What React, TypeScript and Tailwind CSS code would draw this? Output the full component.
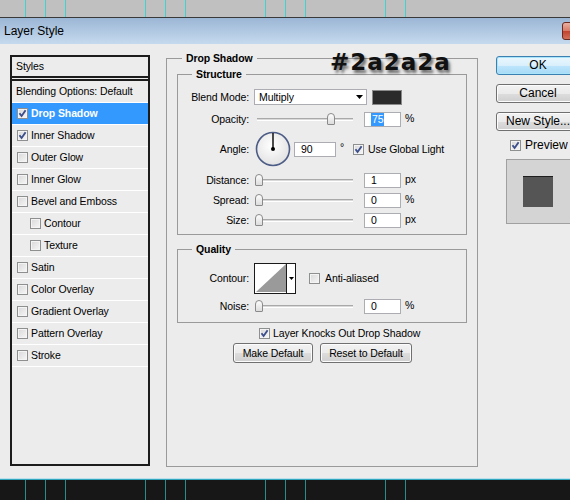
import React from 'react'

// Photoshop "Layer Style" dialog, Win7 chrome

function Ruler({ bar, line }: { bar: string; line: string }) {
  const groups = [3, 3, 3, 2]
  return (
    <div className={`flex shrink-0 gap-[79px] pl-[25px] ${bar}`}>
      {groups.map((n, i) => (
        <div key={i} className="flex gap-[19px]">
          {Array.from({ length: n }).map((_, j) => (
            <div key={j} className={`w-px ${line}`} />
          ))}
        </div>
      ))}
    </div>
  )
}

function Check({ on }: { on?: boolean }) {
  return (
    <span className="inline-flex h-[11px] w-[11px] shrink-0 items-center justify-center border border-[#8e8f8f] bg-[linear-gradient(135deg,#d8d8d8,#f7f7f7)] shadow-[inset_0_0_0_1px_#f4f4f4]">
      {on && (
        <svg viewBox="0 0 9 9" className="h-[9px] w-[9px]">
          <path d="M1.5 4.2 L3.6 7 L7.6 1.3" fill="none" stroke="#3c4f8c" strokeWidth="1.9" />
        </svg>
      )}
    </span>
  )
}

function StyleRow({ label, on, active, indent }: { label: string; on?: boolean; active?: boolean; indent?: boolean }) {
  return (
    <div
      className={`flex h-[22px] items-center gap-[3px] border-b border-white ${indent ? 'pl-[18px]' : 'pl-[5px]'} ${
        active ? 'bg-[#3399ff] font-bold text-white' : ''
      }`}
    >
      <Check on={on} />
      <span>{label}</span>
    </div>
  )
}

function Label({ children }: { children: React.ReactNode }) {
  return <span className="w-[71px] shrink-0 text-right">{children}</span>
}

function Slider({ at }: { at: number }) {
  return (
    <div className="relative ml-[4px] flex h-[15px] w-[104px] shrink-0 items-center px-[4px]">
      <div className="h-[3px] w-full border-t border-b border-t-[#a9a9a9] border-b-white bg-[#d9d9d9]" />
      <div
        className="absolute top-[1px] h-[12px] w-[8px] rounded-t-[4px] rounded-b-[1px] border border-[#8a8a8a] bg-[linear-gradient(#fdfdfd,#dcdcdc)]"
        style={{ left: at }}
      />
    </div>
  )
}

function Field({ value, w = 'w-[37px]', sel }: { value: string; w?: string; sel?: boolean }) {
  return (
    <div className={`flex h-[15px] shrink-0 items-center border border-[#abadb3] bg-white pl-[6px] ${w}`}>
      <span className={sel ? 'bg-[#3399ff] px-px text-white' : ''}>{value}</span>
    </div>
  )
}

function SliderRow({ label, at, value, unit, sel }: { label: string; at: number; value: string; unit: string; sel?: boolean }) {
  return (
    <div className="flex h-[15px] items-center">
      <Label>{label}</Label>
      <Slider at={at} />
      <div className="ml-[7px]">
        <Field value={value} sel={sel} />
      </div>
      <span className="ml-[4px] self-start leading-[12px]">{unit}</span>
    </div>
  )
}

function Btn({ children, w, primary }: { children: React.ReactNode; w: string; primary?: boolean }) {
  return (
    <div
      className={`flex shrink-0 items-center justify-center rounded-[3px] border ${w} ${
        primary
          ? 'border-[#3c7fb1] bg-[linear-gradient(#eaf6fd,#d9f0fc_50%,#bee6fd_51%,#a7d9f5)] shadow-[inset_0_0_0_1px_#a8e4fa]'
          : 'border-[#707070] bg-[linear-gradient(#f2f2f2,#ebebeb_50%,#dddddd_51%,#cfcfcf)] shadow-[inset_0_0_0_1px_#fcfcfc]'
      }`}
    >
      {children}
    </div>
  )
}

export default function App() {
  return (
    <div className="flex h-[500px] w-[570px] flex-col overflow-hidden bg-[#ececec] font-['Liberation_Sans',Arial,sans-serif] text-[10.5px] leading-[13px] tracking-[-0.1px] text-black">
      <Ruler bar="h-[18px] bg-[#c0c0c0] border-b border-[#3a3a3a]" line="bg-[#3fd2d2]" />

      {/* title bar */}
      <div className="flex h-[26px] shrink-0 items-center overflow-hidden bg-[linear-gradient(#9bb6d5,#c6daee)] pl-[4px] tracking-normal">
        <span className="text-[12px]">Layer Style</span>
        <div className="mr-[-12px] ml-auto h-[18px] w-[20px] rounded-[3px] border border-[#6b2a20] bg-[linear-gradient(#eab0a2,#d77a66_50%,#c0432d_51%,#d3705a)]" />
      </div>

      {/* body */}
      <div className="relative flex flex-1 pt-[8px] pl-[10px]">
        {/* styles list */}
        <div className="mt-[3px] flex h-[411px] w-[140px] shrink-0 flex-col border-2 border-[#1c1c1c]">
          <div className="flex h-[21px] items-center border-b-2 border-[#1c1c1c] pl-[4px]">Styles</div>
          <div className="mt-px border-t-2 border-[#1c1c1c]">
            <div className="flex h-[22px] items-center border-b border-white pl-[4px]">Blending Options: Default</div>
            <StyleRow label="Drop Shadow" on active />
            <StyleRow label="Inner Shadow" on />
            <StyleRow label="Outer Glow" />
            <StyleRow label="Inner Glow" />
            <StyleRow label="Bevel and Emboss" />
            <StyleRow label="Contour" indent />
            <StyleRow label="Texture" indent />
            <StyleRow label="Satin" />
            <StyleRow label="Color Overlay" />
            <StyleRow label="Gradient Overlay" />
            <StyleRow label="Pattern Overlay" />
            <StyleRow label="Stroke" />
          </div>
        </div>

        {/* drop shadow settings */}
        <fieldset className="ml-[16px] h-[415px] w-[312px] shrink-0 border border-[#9a9a9a] px-[10px]">
          <legend className="ml-[5px] px-[4px] font-bold">Drop Shadow</legend>

          <fieldset className="mt-[3px] border border-[#9a9a9a] pb-[6px]">
            <legend className="ml-[14px] px-[4px] font-bold">Structure</legend>

            <div className="mt-[8px] flex h-[16px] items-center">
              <Label>Blend Mode:</Label>
              <div className="ml-[5px] flex h-[16px] w-[113px] items-center justify-between border border-[#abadb3] bg-white pr-[3px] pl-[4px]">
                <span>Multiply</span>
                <svg viewBox="0 0 7 4" className="h-[4px] w-[7px]">
                  <path d="M0 0 H7 L3.5 4 Z" fill="#000" />
                </svg>
              </div>
              <div className="ml-[5px] h-[15px] w-[30px] border border-[#8a8a8a] bg-[#2a2a2a]" />
            </div>

            <div className="mt-[7px]">
              <SliderRow label="Opacity:" at={74} value="75" unit="%" sel />
            </div>

            <div className="mt-[4px] flex h-[36px] items-center">
              <Label>Angle:</Label>
              <svg viewBox="0 0 36 36" className="ml-[6px] h-[36px] w-[36px] shrink-0">
                <defs>
                  <radialGradient id="dial" cx="45%" cy="40%" r="60%">
                    <stop offset="0" stopColor="#ffffff" />
                    <stop offset="1" stopColor="#e2e2e2" />
                  </radialGradient>
                </defs>
                <circle cx="18" cy="18" r="16.5" fill="url(#dial)" stroke="#4d5c86" strokeWidth="1.6" />
                <line x1="18" y1="18" x2="18" y2="2" stroke="#000" strokeWidth="1.4" />
                <circle cx="18" cy="18" r="2" fill="#000" />
              </svg>
              <div className="ml-[3px]">
                <Field value="90" w="w-[42px]" />
              </div>
              <span className="ml-[4px] self-center pb-[4px]">°</span>
              <div className="ml-[9px] flex items-center gap-[4px]">
                <Check on />
                <span>Use Global Light</span>
              </div>
            </div>

            <div className="mt-[6px] flex flex-col gap-[5px]">
              <SliderRow label="Distance:" at={2} value="1" unit="px" />
              <SliderRow label="Spread:" at={2} value="0" unit="%" />
              <SliderRow label="Size:" at={2} value="0" unit="px" />
            </div>
          </fieldset>

          <fieldset className="mt-[8px] border border-[#9a9a9a] pb-[8px]">
            <legend className="ml-[14px] px-[4px] font-bold">Quality</legend>

            <div className="mt-[7px] flex h-[31px] items-center">
              <Label>Contour:</Label>
              <div className="ml-[5px] flex h-[31px] w-[42px] border border-[#1a1a1a] bg-white">
                <svg viewBox="0 0 31 29" className="h-[29px] w-[31px]" preserveAspectRatio="none">
                  <polygon points="1,28 31,0 31,29 1,29" fill="#9a9a9a" />
                  <line x1="0" y1="28.5" x2="31" y2="28.5" stroke="#fff" strokeWidth="1" />
                </svg>
                <div className="flex flex-1 items-center justify-center border-l border-[#1a1a1a]">
                  <svg viewBox="0 0 5 3" className="h-[3px] w-[5px]">
                    <path d="M0 0 H5 L2.5 3 Z" fill="#000" />
                  </svg>
                </div>
              </div>
              <div className="ml-[13px] flex items-center gap-[5px]">
                <Check />
                <span>Anti-aliased</span>
              </div>
            </div>

            <div className="mt-[5px]">
              <SliderRow label="Noise:" at={2} value="0" unit="%" />
            </div>
          </fieldset>

          <div className="mt-[4px] flex h-[12px] items-center gap-[3px] pl-[82px]">
            <Check on />
            <span>Layer Knocks Out Drop Shadow</span>
          </div>

          <div className="mt-[4px] flex gap-[7px] pl-[56px]">
            <Btn w="w-[80px] h-[20px]">Make Default</Btn>
            <Btn w="w-[92px] h-[20px]">Reset to Default</Btn>
          </div>
        </fieldset>

        {/* right column */}
        <div className="mt-[4px] ml-[18px] flex shrink-0 flex-col text-[12px] tracking-normal">
          <Btn w="w-[84px] h-[19px]" primary>OK</Btn>
          <div className="mt-[9px]">
            <Btn w="w-[84px] h-[19px]">Cancel</Btn>
          </div>
          <div className="mt-[9px]">
            <Btn w="w-[84px] h-[19px]">New Style...</Btn>
          </div>
          <div className="mt-[8px] flex h-[13px] items-center gap-[4px] pl-[14px]">
            <Check on />
            <span>Preview</span>
          </div>
          <div className="mt-[7px] ml-[10px] h-[65px] w-[70px] border border-[#a0a0a0] bg-[#d4d4d4] pt-[16px] pl-[16px]">
            <div className="h-[31px] w-[30px] border-t border-[#1e1e1e] bg-[#555555]" />
          </div>
        </div>

        {/* colour annotation pasted over the dialog */}
        <span className="absolute top-[7px] left-[330px] font-['DejaVu_Sans',sans-serif] text-[23px] leading-none font-bold tracking-[1px] text-[#111] [text-shadow:2px_3px_3px_rgba(0,0,0,0.55)]">
          #2a2a2a
        </span>
      </div>

      <div className="shrink-0 border-t border-[#bddfec]">
        <div className="h-px bg-[#2fa6bd]" />
        <Ruler bar="h-[20px] bg-[#171717]" line="bg-[#23908f]" />
      </div>
    </div>
  )
}
